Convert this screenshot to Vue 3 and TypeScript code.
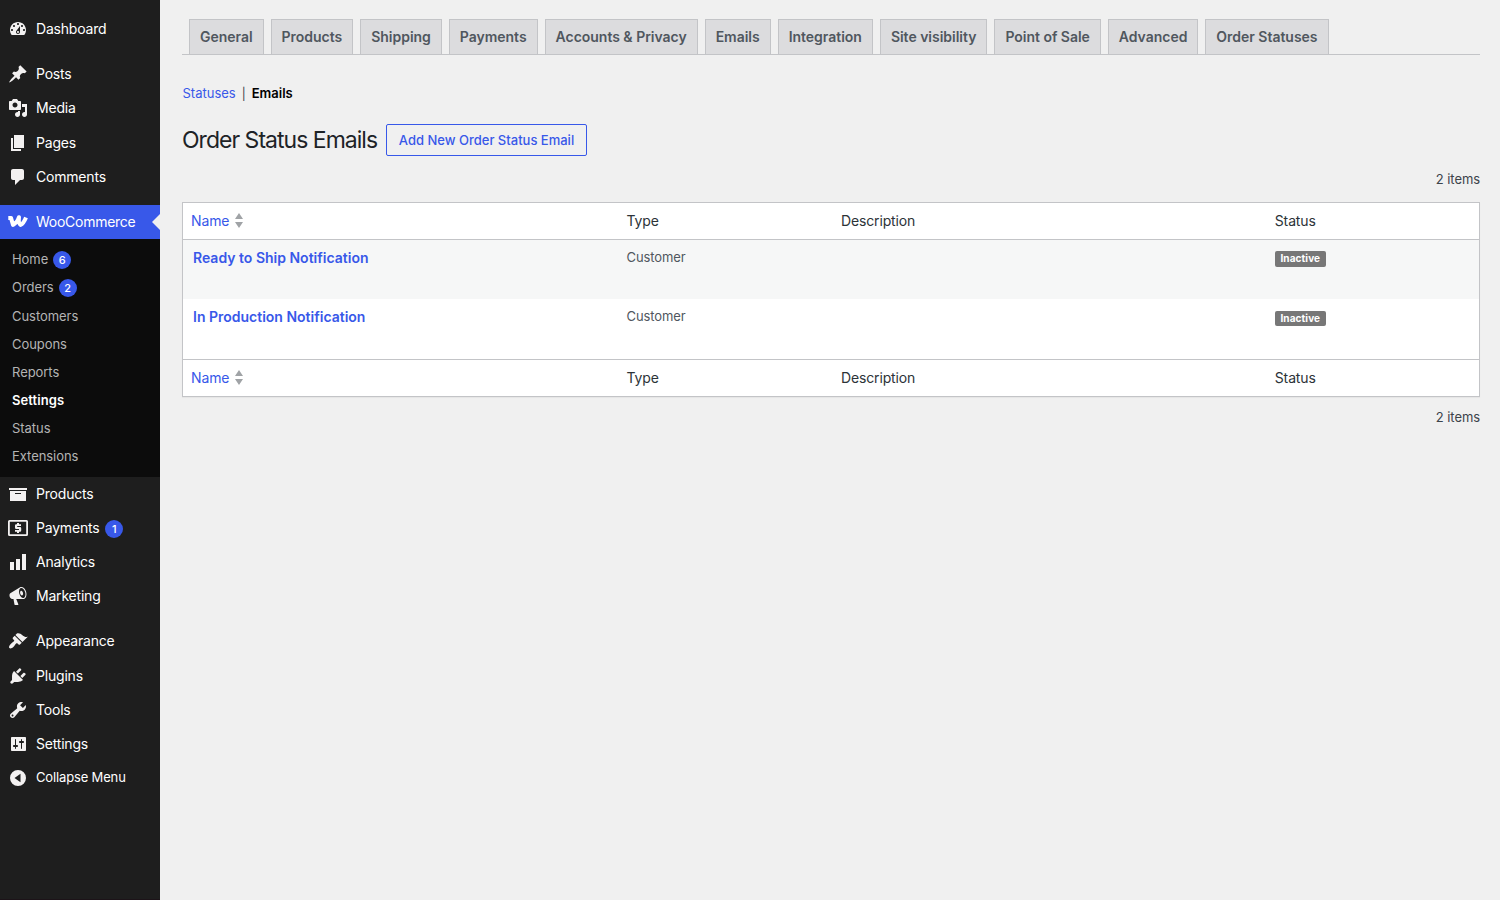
<script setup lang="ts">
interface MenuItem {
  label: string
  icon: string
  badge?: number
}

const topMenu: MenuItem[][] = [
  [{ label: 'Dashboard', icon: 'dashboard' }],
  [
    { label: 'Posts', icon: 'post' },
    { label: 'Media', icon: 'media' },
    { label: 'Pages', icon: 'page' },
    { label: 'Comments', icon: 'comments' },
  ],
]

const bottomMenu: MenuItem[][] = [
  [
    { label: 'Products', icon: 'archive' },
    { label: 'Payments', icon: 'money', badge: 1 },
    { label: 'Analytics', icon: 'chart' },
    { label: 'Marketing', icon: 'megaphone' },
  ],
  [
    { label: 'Appearance', icon: 'appearance' },
    { label: 'Plugins', icon: 'plugins' },
    { label: 'Tools', icon: 'tools' },
    { label: 'Settings', icon: 'settings' },
  ],
]

const submenu: { label: string; badge?: number; current?: boolean }[] = [
  { label: 'Home', badge: 6 },
  { label: 'Orders', badge: 2 },
  { label: 'Customers' },
  { label: 'Coupons' },
  { label: 'Reports' },
  { label: 'Settings', current: true },
  { label: 'Status' },
  { label: 'Extensions' },
]

const icons: Record<string, string> = {
  dashboard:
    'M3.76 16h12.48c1.1-1.37 1.76-3.11 1.76-5 0-4.42-3.58-8-8-8s-8 3.58-8 8c0 1.89.66 3.63 1.76 5zM10 4c.55 0 1 .45 1 1s-.45 1-1 1-1-.45-1-1 .45-1 1-1zM6 6c.55 0 1 .45 1 1s-.45 1-1 1-1-.45-1-1 .45-1 1-1zm8 0c.55 0 1 .45 1 1s-.45 1-1 1-1-.45-1-1 .45-1 1-1zm-5.37 5.55L12 7v6c0 1.1-.9 2-2 2s-2-.9-2-2c0-.57.24-1.08.63-1.45zM4 10c.55 0 1 .45 1 1s-.45 1-1 1-1-.45-1-1 .45-1 1-1zm12 0c.55 0 1 .45 1 1s-.45 1-1 1-1-.45-1-1 .45-1 1-1zm-5 3c0-.55-.45-1-1-1s-1 .45-1 1 .45 1 1 1 1-.45 1-1z',
  post: 'M10.44 3.02l1.82-1.82 6.36 6.35-1.83 1.82c-1.05-.68-2.48-.57-3.41.36l-.75.75c-.92.93-1.04 2.35-.35 3.41l-1.83 1.82-2.41-2.41-2.8 2.79c-.42.42-3.38 2.71-3.8 2.29s1.86-3.39 2.28-3.81l2.79-2.79L4.1 9.36l1.83-1.82c1.05.69 2.48.57 3.4-.36l.75-.75c.93-.92 1.05-2.35.36-3.41z',
  media:
    'M13 11V4c0-.55-.45-1-1-1h-1.67L9 1H5L3.67 3H2c-.55 0-1 .45-1 1v7c0 .55.45 1 1 1h10c.55 0 1-.45 1-1zM7 4.5c1.38 0 2.5 1.12 2.5 2.5S8.38 9.5 7 9.5 4.5 8.38 4.5 7 5.62 4.5 7 4.5zM14 6h5v10.5c0 1.38-1.12 2.5-2.5 2.5S14 17.88 14 16.5s1.12-2.5 2.5-2.5c.17 0 .34.02.5.05V9h-3V6zm-4 8.05V13h2v3.5c0 1.38-1.12 2.5-2.5 2.5S7 17.88 7 16.5 8.12 14 9.5 14c.17 0 .34.02.5.05z',
  page: 'M6 15V2h10v13H6zm-1 1h8v2H3V5h2v11z',
  comments:
    'M5 2h9c1.1 0 2 .9 2 2v7c0 1.1-.9 2-2 2h-2l-5 5v-5H5c-1.1 0-2-.9-2-2V4c0-1.1.9-2 2-2z',
  archive: 'M19 4v2H1V4h18zM2 7h16v10H2V7zm11 3V9H7v1h6z',
  chart: 'M18 18V2h-4v16h4zm-6 0V7H8v11h4zm-6 0v-8H2v8h4z',
  megaphone:
    'M18.15 5.94c.46 1.62.38 3.22-.02 4.48-.42 1.28-1.26 2.18-2.3 2.48-.16.06-.26.06-.4.06-.06.02-.12.02-.18.02-.06.02-.14.02-.22.02h-6.8l2.22 5.5c.02.14-.06.26-.14.34-.08.1-.24.16-.34.16H6.95c-.1 0-.26-.06-.34-.16-.08-.08-.16-.2-.14-.34l-1-5.5H4.25l-.02-.02c-.5.06-1.08-.18-1.54-.62s-.88-1.08-1.06-1.88c-.24-.8-.2-1.56-.02-2.2.18-.62.58-1.08 1.06-1.3l.02-.02 9-5.4c.1-.06.18-.1.24-.16.06-.04.14-.08.24-.12.16-.08.28-.12.5-.18 1.04-.3 2.24.1 3.22.98s1.84 2.24 2.26 3.86zm-2.58 5.98h-.02c.4-.1.74-.34 1.04-.7.58-.7.86-1.76.86-3.04 0-.64-.1-1.3-.28-1.98-.34-1.36-1.02-2.5-1.78-3.24s-1.68-1.1-2.46-.88c-.82.22-1.4.96-1.7 2-.32 1.04-.28 2.36.06 3.72.38 1.36 1 2.5 1.8 3.24.78.74 1.62 1.1 2.48.88zm-2.54-7.08c.22-.04.42-.02.62.04.38.16.76.48 1.02 1s.42 1.2.42 1.78c0 .3-.04.56-.12.8-.18.48-.44.84-.86.94-.34.1-.8-.06-1.14-.4s-.64-.86-.78-1.5c-.18-.62-.12-1.24.02-1.72s.48-.84.82-.94z',
  appearance:
    'M14.48 11.06L7.41 3.99l1.5-1.5c.5-.56 2.3-.47 3.51.32 1.21.8 1.43 1.28 2.91 2.1 1.18.64 2.45 1.26 4.45.85zm-.71.71L6.7 4.7 4.93 6.47c-.39.39-.39 1.02 0 1.41l1.06 1.06c.39.39.39 1.03 0 1.42-.6.6-1.43 1.11-2.21 1.69-.35.26-.7.53-1.01.84C1.43 14.23.4 16.08 1.4 17.07c.99 1 2.84-.03 4.18-1.36.31-.31.58-.66.85-1.02.57-.78 1.08-1.61 1.69-2.21.39-.39 1.02-.39 1.41 0l1.06 1.06c.39.39 1.02.39 1.41 0z',
  plugins:
    'M13.11 4.36L9.87 7.6 8 5.73l3.24-3.24c.35-.34 1.05-.2 1.56.32.52.51.66 1.21.31 1.55zm-8 1.77l.91-1.12 9.01 9.01-1.19.84c-.71.71-2.63 1.16-3.82 1.16H6.14L4.9 17.26c-.59.59-1.54.59-2.12 0-.59-.58-.59-1.53 0-2.12l1.24-1.24v-3.88c0-1.13.4-3.19 1.09-3.89zm7.26 3.97l3.24-3.24c.34-.35 1.04-.21 1.55.31.52.51.66 1.21.31 1.55l-3.24 3.25z',
  tools:
    'M16.68 9.77c-1.34 1.34-3.3 1.67-4.95.99l-5.41 6.52c-.99.99-2.59.99-3.58 0s-.99-2.59 0-3.57l6.52-5.42c-.68-1.65-.35-3.61.99-4.95 1.28-1.28 3.12-1.62 4.72-1.06l-2.89 2.89 2.82 2.82 2.86-2.87c.53 1.58.18 3.39-1.08 4.65zM3.81 16.21c.4.39 1.04.39 1.43 0 .4-.4.4-1.04 0-1.43-.39-.4-1.03-.4-1.43 0-.39.39-.39 1.03 0 1.43z',
  settings:
    'M18 16V4c0-.55-.45-1-1-1H4c-.55 0-1 .45-1 1v12c0 .55.45 1 1 1h13c.55 0 1-.45 1-1zM8 11h1c.55 0 1 .45 1 1s-.45 1-1 1H8v1.5c0 .28-.22.5-.5.5s-.5-.22-.5-.5V13H6c-.55 0-1-.45-1-1s.45-1 1-1h1V5.5c0-.28.22-.5.5-.5s.5.22.5.5V11zm5-2h-1c-.55 0-1-.45-1-1s.45-1 1-1h1V5.5c0-.28.22-.5.5-.5s.5.22.5.5V7h1c.55 0 1 .45 1 1s-.45 1-1 1h-1v5.5c0 .28-.22.5-.5.5s-.5-.22-.5-.5V9z',
  money:
    'M1.5 2h17A1.5 1.5 0 0 1 20 3.5v13a1.5 1.5 0 0 1-1.5 1.5h-17A1.5 1.5 0 0 1 0 16.5v-13A1.5 1.5 0 0 1 1.5 2zM1.8 3.8v12.4h16.400V3.800zM9 5h2v1.200h2v1.800H9.200v1H12a1.200 1.200 0 0 1 1.200 1.200v2.400A1.200 1.200 0 0 1 12 13.800h-1V15H9v-1.200H7V12h4v-1H8.200A1.200 1.200 0 0 1 7 9.800V7.400a1.200 1.200 0 0 1 1.200-1.200H9z',
  collapse:
    'M10 2a8 8 0 1 1 0 16 8 8 0 0 1 0-16zM12.500 5.800L6.500 10l6 4.200z',
}

const tabs: string[] = [
  'General',
  'Products',
  'Shipping',
  'Payments',
  'Accounts & Privacy',
  'Emails',
  'Integration',
  'Site visibility',
  'Point of Sale',
  'Advanced',
  'Order Statuses',
]

const rows = [
  { name: 'Ready to Ship Notification', type: 'Customer', description: '', status: 'Inactive' },
  { name: 'In Production Notification', type: 'Customer', description: '', status: 'Inactive' },
]
</script>

<template>
  <div class="admin">
    <nav class="sidebar">
      <ul v-for="(group, g) in topMenu" :key="'t' + g" class="group">
        <li v-for="item in group" :key="item.label" class="item">
          <svg class="icon" viewBox="0 0 20 20"><path fill-rule="evenodd" :d="icons[item.icon]" /></svg>
          <span>{{ item.label }}</span>
        </li>
      </ul>

      <div class="item active">
        <svg class="icon woo" viewBox="0 0 20 20">
          <path d="M0.300 5.900H3L5 12.900Q9.300 10.600 11 5.200Q10.300 11.400 12.500 12.900Q15.500 11.600 18 5.400" />
        </svg>
        <span>WooCommerce</span>
      </div>
      <ul class="submenu">
        <li v-for="s in submenu" :key="s.label" :class="{ current: s.current, tall: s.badge }">
          <span>{{ s.label }}</span>
          <b v-if="s.badge" class="badge">{{ s.badge }}</b>
        </li>
      </ul>

      <ul v-for="(group, g) in bottomMenu" :key="'b' + g" class="group">
        <li v-for="item in group" :key="item.label" class="item">
          <svg class="icon" viewBox="0 0 20 20"><path fill-rule="evenodd" :d="icons[item.icon]" /></svg>
          <span>{{ item.label }}</span>
          <b v-if="item.badge" class="badge">{{ item.badge }}</b>
        </li>
      </ul>
      <div class="item collapse">
        <svg class="icon" viewBox="0 0 20 20"><path fill-rule="evenodd" :d="icons.collapse" /></svg>
        <span>Collapse Menu</span>
      </div>
    </nav>

    <main class="content">
      <div class="tabs">
        <a v-for="tab in tabs" :key="tab" class="tab">{{ tab }}</a>
      </div>

      <div class="sections">
        <a class="link">Statuses</a><span class="bar">|</span><strong>Emails</strong>
      </div>

      <div class="heading">
        <h1>Order Status Emails</h1>
        <button class="add" type="button">Add New Order Status Email</button>
      </div>

      <div class="count top">2 items</div>

      <div class="table">
        <div class="row head">
          <div class="link sortable">
            <span>Name</span>
            <svg class="sorter" viewBox="0 0 8 15"><path d="M4 0l4 6H0zM4 15L0 9h8z" /></svg>
          </div>
          <div>Type</div>
          <div>Description</div>
          <div>Status</div>
        </div>
        <div v-for="row in rows" :key="row.name" class="row body">
          <div class="name">{{ row.name }}</div>
          <div class="type">{{ row.type }}</div>
          <div>{{ row.description }}</div>
          <div><span class="pill">{{ row.status }}</span></div>
        </div>
        <div class="row foot">
          <div class="link sortable">
            <span>Name</span>
            <svg class="sorter" viewBox="0 0 8 15"><path d="M4 0l4 6H0zM4 15L0 9h8z" /></svg>
          </div>
          <div>Type</div>
          <div>Description</div>
          <div>Status</div>
        </div>
      </div>

      <div class="count">2 items</div>
    </main>
  </div>
</template>

<style>
body {
  margin: 0;
  background: #f0f0f0;
}
</style>

<style scoped>
.admin {
  display: flex;
  height: 900px;
  overflow: hidden;
  background: #f0f0f0;
  color: #3c434a;
  font-family: Inter, 'Liberation Sans', sans-serif;
  font-size: 13px;
}

ul {
  list-style: none;
  margin: 0;
  padding: 0;
}

.sidebar {
  box-sizing: border-box;
  width: 160px;
  flex: none;
  padding-top: 12px;
  border-bottom: 1px solid #1c1318;
  background: #1e1e1e;
  color: #fff;
}

.group {
  padding-bottom: 11px;
}

.item {
  display: flex;
  align-items: center;
  height: 34.2px;
  padding-left: 8px;
  font-size: 14px;
  letter-spacing: -0.2px;
}

.item > span {
  padding-bottom: 1.2px;
}

.icon {
  width: 20px;
  height: 20px;
  margin-right: 8px;
  flex: none;
  fill: #f3f1f1;
}

.active {
  position: relative;
  background: #3858e9;
  letter-spacing: -0.27px;
}

.active::after {
  content: '';
  position: absolute;
  right: 0;
  top: 9px;
  border: 8px solid transparent;
  border-left: 0;
  border-right-color: #f0f0f0;
}

.woo {
  fill: none;
  stroke: #fff;
  stroke-width: 4;
  stroke-linejoin: round;
}

.submenu {
  box-sizing: border-box;
  height: 237.45px;
  padding-top: 6.2px;
  background: #0c0c0c;
  color: #b4b4b4;
  letter-spacing: -0.05px;
}

.submenu li {
  display: flex;
  align-items: center;
  height: 28px;
  padding-left: 12px;
}

.submenu li.tall {
  height: 28.2px;
}

.submenu .tall > span {
  padding-bottom: 1px;
}

.submenu .tall .badge {
  margin-left: 5px;
}

.submenu .tall + li:not(.tall) {
  margin-top: 0.7px;
}

.submenu .current {
  color: #fff;
  font-weight: 600;
  letter-spacing: 0.08px;
}

.badge {
  width: 18px;
  height: 18px;
  margin: 1px 0 0 6px;
  border-radius: 9px;
  background: #3858e9;
  color: #fff;
  font-size: 11px;
  font-weight: 500;
  line-height: 18px;
  text-align: center;
  letter-spacing: 0;
}

.item .badge {
  margin-top: 2px;
}

.collapse {
  height: 34px;
  margin-top: -11px;
  font-size: 13px;
  letter-spacing: -0.15px;
}

.content {
  flex: 1;
  padding: 19px 20px 0 22px;
}

.tabs {
  display: flex;
  gap: 7px;
  height: 35px;
  padding-left: 7px;
  border-bottom: 1px solid #c3c4c7;
}

.tab {
  padding: 0 10px;
  border: 1px solid #c3c4c7;
  border-bottom: 0;
  background: #dcdcde;
  color: #50575e;
  font-size: 14px;
  font-weight: 600;
  letter-spacing: -0.022px;
  line-height: 33px;
  white-space: nowrap;
}

.link {
  color: #3858e9;
}

.sections {
  height: 20px;
  margin-top: 28px;
  padding-left: 0.5px;
  line-height: 20px;
}

.sections .bar {
  margin: 0 6px;
  font-size: 12px;
}

.sections strong {
  color: #000;
  font-weight: 600;
}

.heading {
  display: flex;
  align-items: center;
  gap: 9px;
  height: 32px;
  margin-top: 21px;
}

h1 {
  width: 195px;
  margin: 0;
  color: #1d2327;
  font-size: 23px;
  font-weight: 400;
  letter-spacing: -0.98px;
  white-space: nowrap;
}

.add {
  box-sizing: border-box;
  width: 201px;
  height: 32px;
  padding: 0;
  border: 1px solid #3858e9;
  border-radius: 2px;
  background: transparent;
  color: #3858e9;
  font: 500 13px Inter, sans-serif;
  white-space: nowrap;
}

.count {
  margin-top: 9px;
  line-height: 22px;
  text-align: right;
  letter-spacing: -0.08px;
}

.count.top {
  margin: 12px 0;
}

.table {
  border: 1px solid #c3c4c7;
  background: #fff;
  box-shadow: 0 1px 1px rgba(0, 0, 0, 0.04);
}

.row {
  display: grid;
  grid-template-columns: 435.6px 214.4px 433.8px 1fr;
}

.row > div {
  padding-left: 8px;
}

.head,
.foot {
  height: 36px;
  color: #2c3338;
  font-size: 14px;
  letter-spacing: -0.14px;
  line-height: 36px;
}

.head {
  border-bottom: 1px solid #c3c4c7;
}

.foot {
  border-top: 1px solid #c3c4c7;
}

.row > .sortable {
  display: flex;
  align-items: center;
  gap: 6px;
}

.row > .link {
  color: #3858e9;
}

.sorter {
  width: 8px;
  height: 15px;
  margin-bottom: 1px;
  fill: #a0a3a6;
}

.body {
  height: 60px;
  color: #50575e;
  line-height: 20px;
}

.body > div {
  padding-top: 8px;
}

.body:nth-child(2) {
  height: 59px;
  background: #f6f7f7;
}

.row > .type {
  padding-top: 7px;
  letter-spacing: -0.1px;
}

.row > .name {
  padding-left: 10px;
  color: #3858e9;
  font-size: 14px;
  font-weight: 600;
}

.pill {
  display: block;
  width: 51px;
  height: 16px;
  margin-top: 3px;
  border-radius: 2px;
  background: #777;
  color: #fff;
  font-size: 10px;
  font-weight: 700;
  letter-spacing: 0.1px;
  line-height: 15px;
  text-align: center;
}

.body:nth-child(3) .pill {
  height: 15px;
  margin-top: 4px;
}
</style>
